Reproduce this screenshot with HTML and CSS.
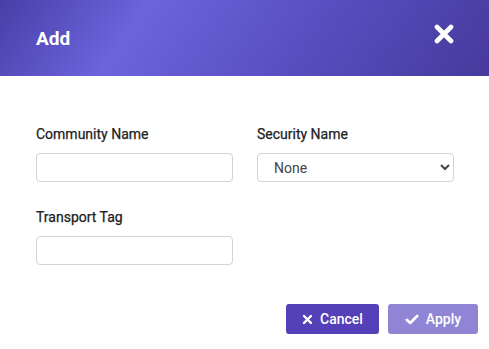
FILE: index.html
```html
<!DOCTYPE html>
<html>
<head>
<meta charset="utf-8">
<link rel="stylesheet" href="styles.css">
</head>
<body>
<div class="dialog">
  <header class="header">
    <h1 class="title">Add</h1>
    <button class="close" aria-label="Close">
      <svg width="20" height="20" viewBox="0 0 20 20"><path d="M3 3 L17 17 M17 3 L3 17" stroke="#fff" stroke-width="4.6" stroke-linecap="round"/></svg>
    </button>
  </header>
  <div class="content">
    <div class="grid">
      <div class="field">
        <label class="label">Community Name</label>
        <input class="input" type="text">
      </div>
      <div class="field">
        <label class="label">Security Name</label>
        <select class="input select"><option>None</option></select>
      </div>
      <div class="field">
        <label class="label">Transport Tag</label>
        <input class="input" type="text">
      </div>
    </div>
    <div class="actions">
      <button class="btn btn-cancel">
        <svg width="11" height="11" viewBox="0 0 11 11"><path d="M2 2 L9 9 M9 2 L2 9" stroke="#fff" stroke-width="2.4" stroke-linecap="round"/></svg>
        Cancel
      </button>
      <button class="btn btn-apply">
        <svg width="14" height="11" viewBox="0 0 14 11"><path d="M1.8 5.8 L5.2 9 L12.2 2" fill="none" stroke="#fff" stroke-width="2.6" stroke-linecap="round" stroke-linejoin="round"/></svg>
        Apply
      </button>
    </div>
  </div>
</div>
</body>
</html>
```
FILE: styles.css
```css
html, body {
  margin: 0;
  padding: 0;
  background: #fff;
  font-family: Roboto, "Liberation Sans", Arial, sans-serif;
}
.dialog {
  width: 489px;
  height: 349px;
  display: flex;
  flex-direction: column;
}
.header {
  height: 76px;
  box-sizing: border-box;
  display: flex;
  align-items: center;
  justify-content: space-between;
  padding: 0 34px 0 36px;
  background: linear-gradient(125deg, #4a3ea6 0%, #6b64dd 28%, #5a4fc2 60%, #463a9c 100%);
}
.title {
  margin: 0;
  color: #fff;
  font-size: 19px;
  font-weight: 700;
  padding-top: 1px;
}
.close {
  background: none;
  border: 0;
  padding: 0;
  width: 22px;
  height: 22px;
  display: flex;
  align-items: center;
  justify-content: center;
  margin-top: -8px;
}
.content {
  padding: 50px 36px 0 36px;
}
.grid {
  display: grid;
  grid-template-columns: 197px 197px;
  column-gap: 24px;
  row-gap: 27px;
}
.field {
  display: flex;
  flex-direction: column;
}
.label {
  font-size: 14px;
  font-weight: 400;
  color: #222;
  line-height: 16px;
  margin-bottom: 11px;
  -webkit-text-stroke: 0.25px #222;
}
.input {
  box-sizing: border-box;
  height: 29px;
  border: 1px solid #ced4da;
  border-radius: 4px;
  background: #fff;
  font-family: inherit;
  font-size: 14px;
  color: #444;
  padding: 0 8px;
  outline: none;
}
.select {
  padding-left: 12px;
}
.actions {
  display: flex;
  justify-content: flex-end;
  gap: 9px;
  margin-top: 39px;
  margin-right: -25px;
}
.btn {
  height: 30px;
  border: 0;
  border-radius: 3px;
  color: #fff;
  font-family: inherit;
  font-size: 14px;
  font-weight: 500;
  display: flex;
  align-items: center;
  justify-content: center;
  gap: 7px;
}
.btn-cancel {
  width: 93px;
  background: #5441b9;
}
.btn-apply {
  width: 90px;
  background: #9085d5;
}
```
